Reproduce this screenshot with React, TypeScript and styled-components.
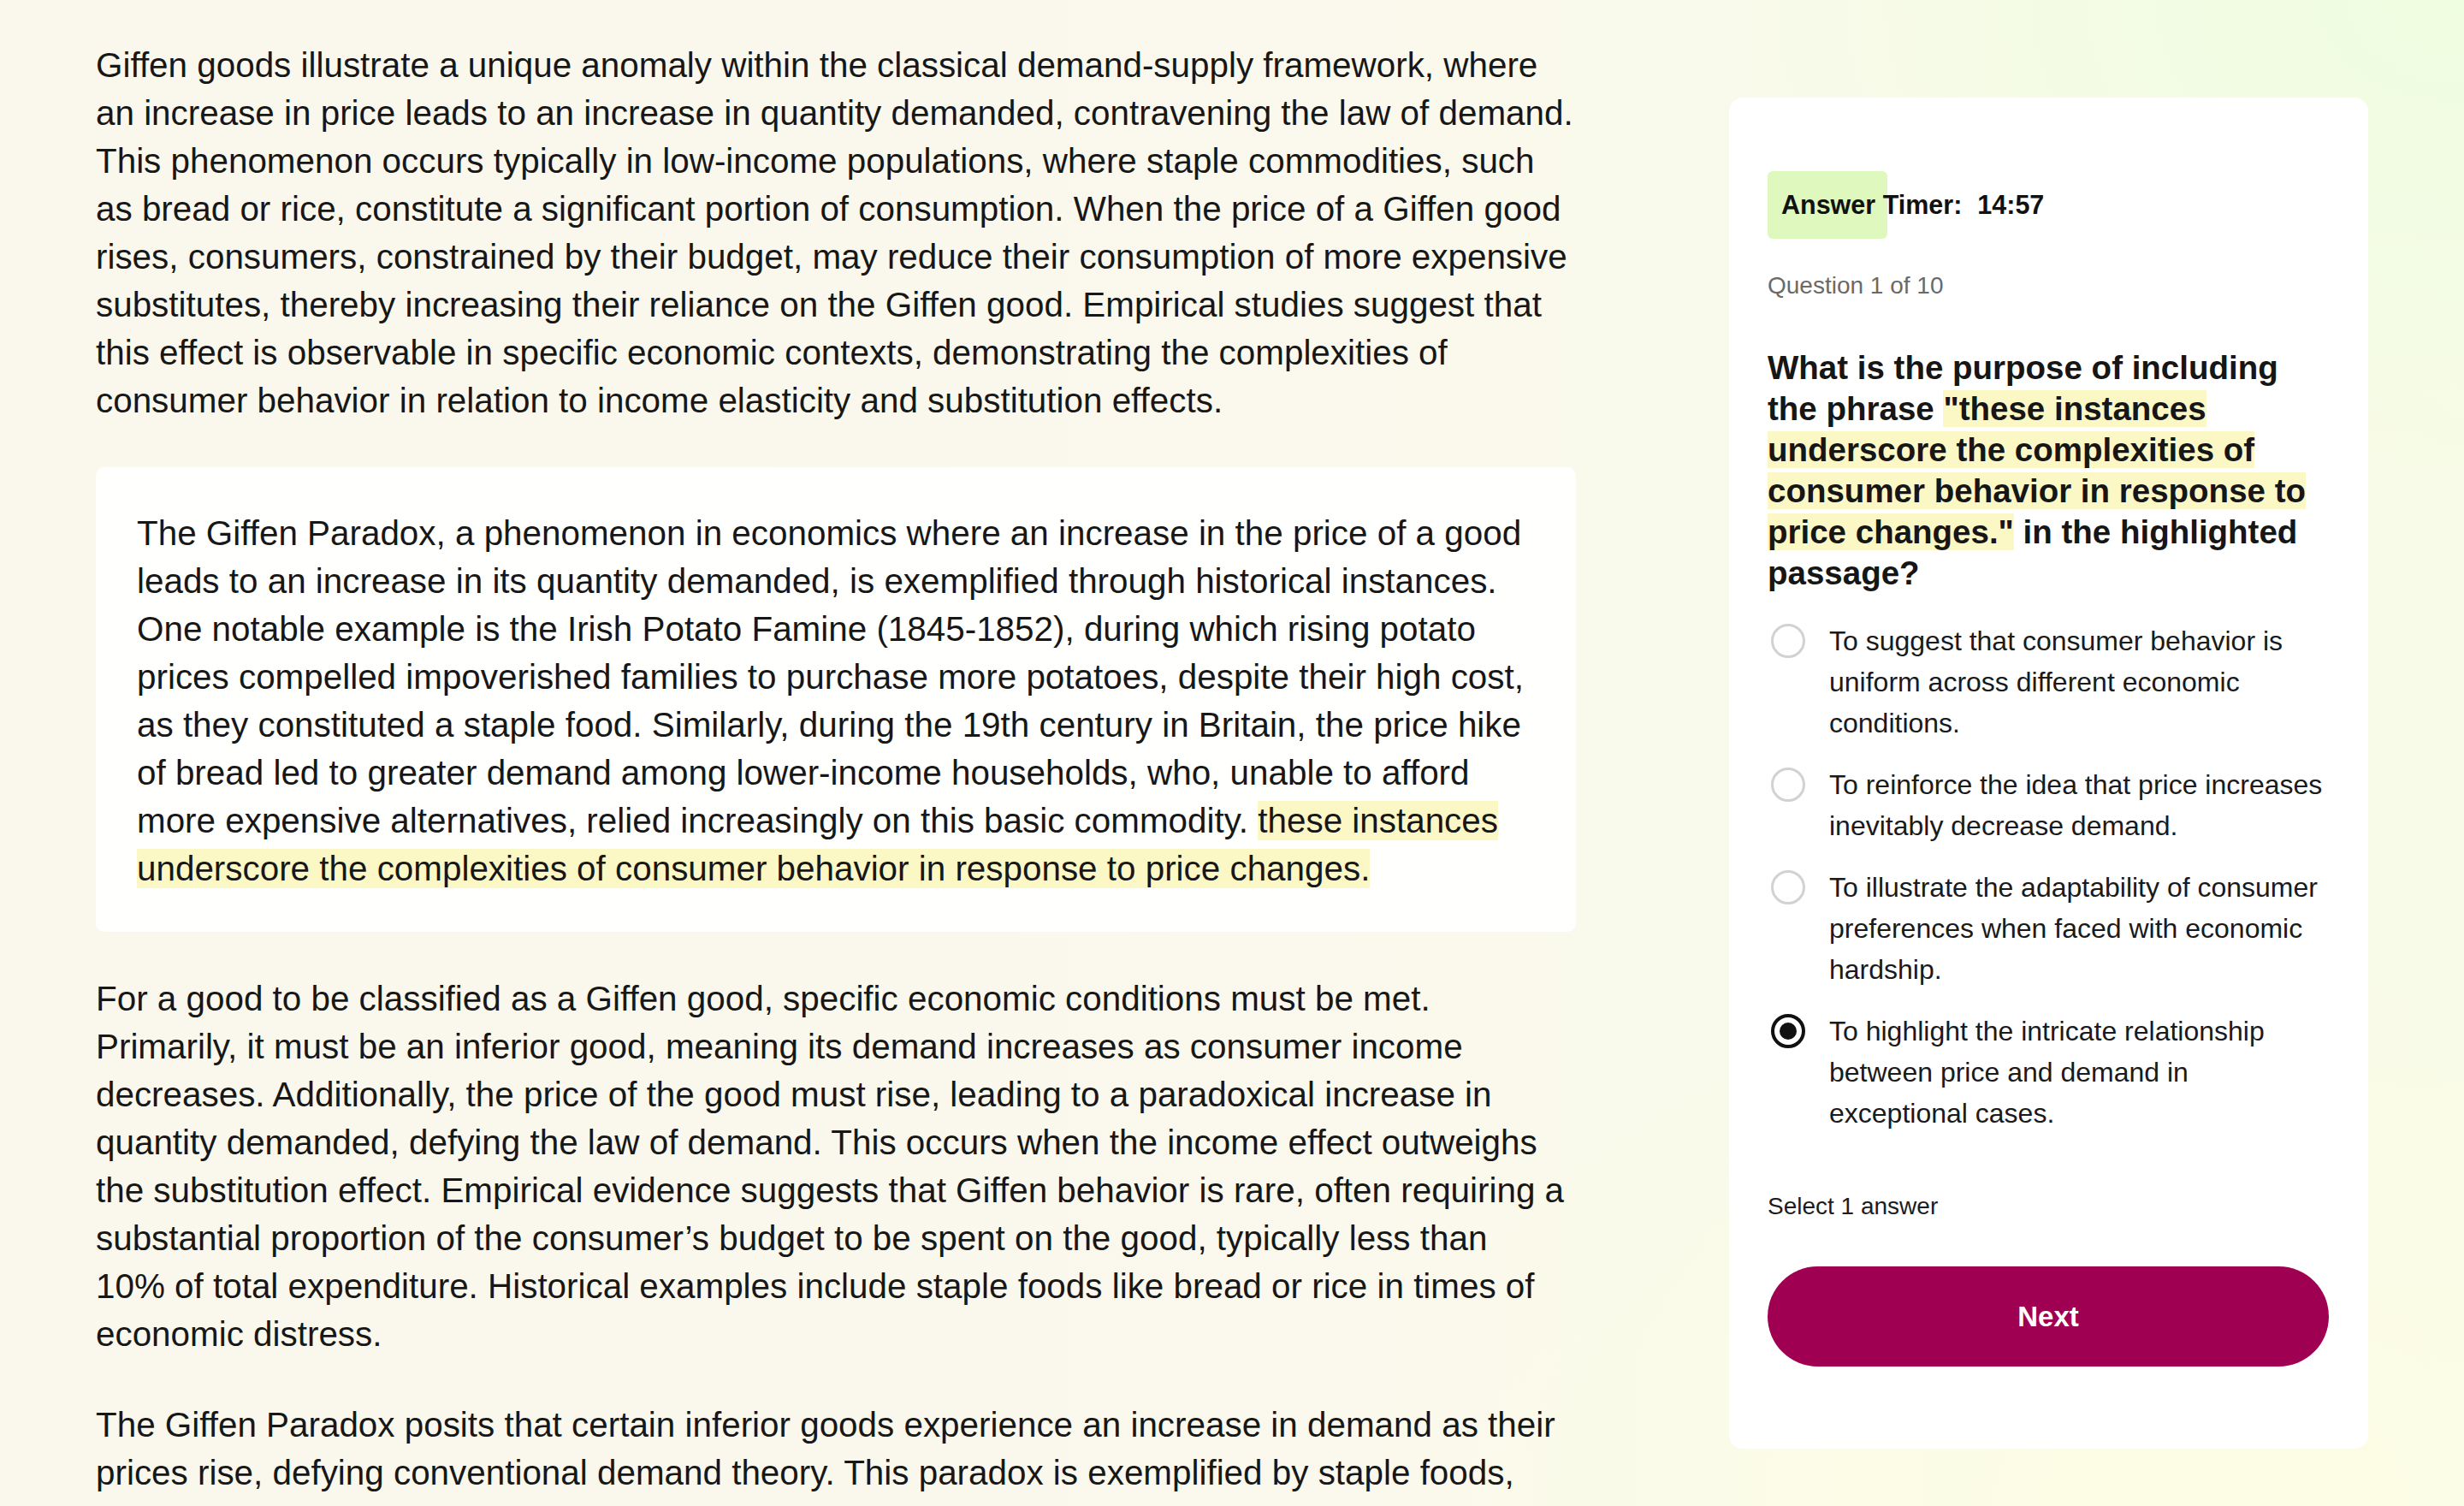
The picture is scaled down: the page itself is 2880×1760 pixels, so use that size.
import * as React from "react";
import styled, { createGlobalStyle } from "styled-components";

const GlobalStyle = createGlobalStyle`
  html, body {
    margin: 0;
    padding: 0;
    height: 100%;
    overflow: hidden;
  }
  body {
    font-family: "Liberation Sans", Arial, sans-serif;
    color: #161616;
    background: #faf8ec;
  }
`;

const Page = styled.div`
  height: 1760px;
  overflow: hidden;
  box-sizing: border-box;
  padding: 48px 112px 0;
  display: flex;
  gap: 179px;
  align-items: flex-start;
  background:
    radial-gradient(ellipse 1300px 900px at 100% 0%, #effde0 0%, rgba(239, 253, 224, 0) 70%),
    radial-gradient(ellipse 1400px 900px at 90% 100%, #fdfde4 0%, rgba(253, 253, 228, 0) 70%),
    linear-gradient(90deg, #faf7ed 0%, #faf9ec 60%, #f8fbe8 100%);
`;

const Passage = styled.div`
  width: 1730px;
  flex-shrink: 0;
  display: flex;
  flex-direction: column;
  gap: 50px;
`;

const Paragraph = styled.p`
  margin: 0;
  font-size: 40.4px;
  line-height: 56px;
  color: #171717;
`;

const QuoteCard = styled.div`
  background: #fffffe;
  border-radius: 10px;
  padding: 49px 48px 46px;
`;

const Mark = styled.mark`
  background: #fcf8c6;
  color: inherit;
`;

const Panel = styled.aside`
  width: 747px;
  flex-shrink: 0;
  box-sizing: border-box;
  margin-top: 66px;
  background: #ffffff;
  border-radius: 16px;
  padding: 86px 46px 96px 45px;
  display: flex;
  flex-direction: column;
`;

const Timer = styled.div`
  position: relative;
  height: 79px;
  display: flex;
  align-items: center;
  padding-left: 16px;
  font-size: 30.5px;
  font-weight: 700;
  color: #111;
`;

const TimerFill = styled.div`
  position: absolute;
  left: 0;
  top: 0;
  bottom: 0;
  width: 140px;
  border-radius: 6px;
  background: #def8bd;
`;

const TimerText = styled.span`
  position: relative;
`;

const TimerValue = styled.span`
  position: relative;
  margin-left: 18px;
`;

const Progress = styled.div`
  margin-top: 35px;
  font-size: 28px;
  line-height: 40px;
  color: #6a6a6a;
`;

const Question = styled.h2`
  margin: 52px 0 0;
  font-size: 38.5px;
  line-height: 48px;
  font-weight: 700;
  color: #161616;
`;

const Options = styled.div`
  margin-top: 31px;
  display: flex;
  flex-direction: column;
  gap: 24px;
`;

const Option = styled.label`
  display: flex;
  align-items: flex-start;
  gap: 28px;
  font-size: 32px;
  line-height: 48px;
  color: #1a1a1a;
  cursor: pointer;
`;

const Radio = styled.span<{ $checked?: boolean }>`
  flex-shrink: 0;
  box-sizing: border-box;
  width: 40px;
  height: 40px;
  margin-top: 4px;
  margin-left: 4px;
  border-radius: 50%;
  border: ${(p) => (p.$checked ? "4px solid #111" : "3px solid #d2d2d2")};
  display: flex;
  align-items: center;
  justify-content: center;
  &::after {
    content: "";
    display: ${(p) => (p.$checked ? "block" : "none")};
    width: 20px;
    height: 20px;
    border-radius: 50%;
    background: #111;
  }
`;

const Hint = styled.div`
  margin-top: 65px;
  font-size: 28px;
  line-height: 40px;
  color: #1c1c1c;
`;

const NextButton = styled.button`
  margin-top: 50px;
  height: 117px;
  border: none;
  border-radius: 59px;
  background: #a00052;
  color: #fff;
  font-family: inherit;
  font-size: 33px;
  font-weight: 700;
  cursor: pointer;
`;

const options = [
  "To suggest that consumer behavior is uniform across different economic conditions.",
  "To reinforce the idea that price increases inevitably decrease demand.",
  "To illustrate the adaptability of consumer preferences when faced with economic hardship.",
  "To highlight the intricate relationship between price and demand in exceptional cases.",
];

export default function App() {
  const [selected, setSelected] = React.useState(3);

  return (
    <>
      <GlobalStyle />
      <Page>
        <Passage>
          <Paragraph>
            Giffen goods illustrate a unique anomaly within the classical demand-supply framework, where
            an increase in price leads to an increase in quantity demanded, contravening the law of demand.
            This phenomenon occurs typically in low-income populations, where staple commodities, such as
            bread or rice, constitute a significant portion of consumption. When the price of a Giffen good
            rises, consumers, constrained by their budget, may reduce their consumption of more expensive
            substitutes, thereby increasing their reliance on the Giffen good. Empirical studies suggest that
            this effect is observable in specific economic contexts, demonstrating the complexities of
            consumer behavior in relation to income elasticity and substitution effects.
          </Paragraph>
          <QuoteCard>
            <Paragraph>
              The Giffen Paradox, a phenomenon in economics where an increase in the price of a good leads to
              an increase in its quantity demanded, is exemplified through historical instances. One notable
              example is the Irish Potato Famine (1845-1852), during which rising potato prices compelled
              impoverished families to purchase more potatoes, despite their high cost, as they constituted a
              staple food. Similarly, during the 19th century in Britain, the price hike of bread led to
              greater demand among lower-income households, who, unable to afford more expensive
              alternatives, relied increasingly on this basic commodity.{" "}
              <Mark>
                these instances underscore the complexities of consumer behavior in response to price changes.
              </Mark>
            </Paragraph>
          </QuoteCard>
          <Paragraph>
            For a good to be classified as a Giffen good, specific economic conditions must be met.
            Primarily, it must be an inferior good, meaning its demand increases as consumer income
            decreases. Additionally, the price of the good must rise, leading to a paradoxical increase in
            quantity demanded, defying the law of demand. This occurs when the income effect outweighs the
            substitution effect. Empirical evidence suggests that Giffen behavior is rare, often requiring a
            substantial proportion of the consumer’s budget to be spent on the good, typically less than
            <br />
            10% of total expenditure. Historical examples include staple foods like bread or rice in times of
            economic distress.
          </Paragraph>
          <Paragraph>
            The Giffen Paradox posits that certain inferior goods experience an increase in demand as their
            prices rise, defying conventional demand theory. This paradox is exemplified by staple foods,
            such as bread or rice, where households with limited income are compelled to buy more of the
            basic good when its price increases, forgoing costlier alternatives altogether.
          </Paragraph>
        </Passage>

        <Panel>
          <Timer>
            <TimerFill />
            <TimerText>Answer Timer:</TimerText>
            <TimerValue>14:57</TimerValue>
          </Timer>
          <Progress>Question 1 of 10</Progress>
          <Question>
            What is the purpose of including the phrase{" "}
            <Mark>"these instances underscore the complexities of consumer behavior in response to price changes."</Mark>{" "}
            in the highlighted passage?
          </Question>
          <Options>
            {options.map((text, i) => (
              <Option key={i} onClick={() => setSelected(i)}>
                <Radio $checked={selected === i} />
                <span>{text}</span>
              </Option>
            ))}
          </Options>
          <Hint>Select 1 answer</Hint>
          <NextButton>Next</NextButton>
        </Panel>
      </Page>
    </>
  );
}
